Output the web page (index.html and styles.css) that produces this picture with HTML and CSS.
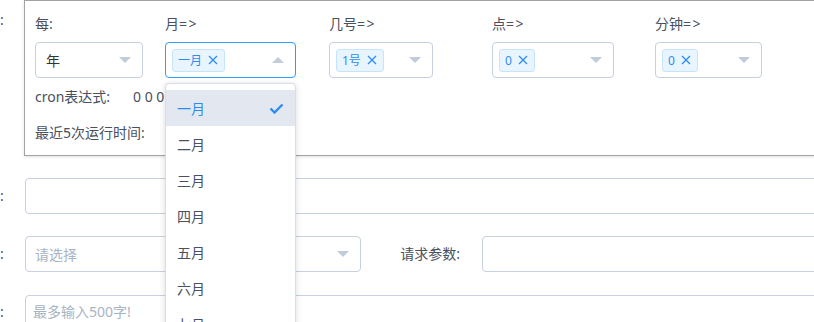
FILE: index.html
```html
<!DOCTYPE html>
<html lang="zh">
<head>
<meta charset="utf-8">
<link rel="stylesheet" href="styles.css">
</head>
<body>
<div class="page">
  <div class="row row-cron">
    <div class="lbl lbl-top">:</div>
    <div class="panel">
      <div class="fields">
        <div class="field">
          <div class="flabel">每:</div>
          <div class="sel w-year"><span class="val">年</span><span class="arrow"></span></div>
        </div>
        <div class="field">
          <div class="flabel">月<span class="op">=&gt;</span></div>
          <div class="sel has-tag w-month focus">
            <span class="tag">一月<svg class="x" width="10" height="10" viewBox="0 0 10 10"><path d="M1 1L9 9M9 1L1 9" stroke="#2d8cf0" stroke-width="1.3" fill="none"/></svg></span>
            <span class="arrow up"></span>
            <ul class="dropdown">
              <li class="selected">一月<svg class="check" width="15" height="11" viewBox="0 0 15 11"><path d="M1.5 5.5L5.5 9.5L13.5 1.5" stroke="#2d8cf0" stroke-width="2.4" fill="none"/></svg></li>
              <li>二月</li>
              <li>三月</li>
              <li>四月</li>
              <li>五月</li>
              <li>六月</li>
              <li>七月</li>
              <li>八月</li>
            </ul>
          </div>
        </div>
        <div class="field">
          <div class="flabel">几号<span class="op">=&gt;</span></div>
          <div class="sel has-tag w-day"><span class="tag">1号<svg class="x" width="10" height="10" viewBox="0 0 10 10"><path d="M1 1L9 9M9 1L1 9" stroke="#2d8cf0" stroke-width="1.3" fill="none"/></svg></span><span class="arrow"></span></div>
        </div>
        <div class="field">
          <div class="flabel">点<span class="op">=&gt;</span></div>
          <div class="sel has-tag w-hour"><span class="tag">0<svg class="x" width="10" height="10" viewBox="0 0 10 10"><path d="M1 1L9 9M9 1L1 9" stroke="#2d8cf0" stroke-width="1.3" fill="none"/></svg></span><span class="arrow"></span></div>
        </div>
        <div class="field">
          <div class="flabel">分钟<span class="op">=&gt;</span></div>
          <div class="sel has-tag w-min"><span class="tag">0<svg class="x" width="10" height="10" viewBox="0 0 10 10"><path d="M1 1L9 9M9 1L1 9" stroke="#2d8cf0" stroke-width="1.3" fill="none"/></svg></span><span class="arrow"></span></div>
        </div>
      </div>
      <div class="cline"><span class="clabel">cron表达式:</span><span class="cval">0 0 0 1 1 ? *</span></div>
      <div class="cline"><span class="clabel auto">最近5次运行时间:</span></div>
    </div>
  </div>

  <div class="row row-1">
    <div class="lbl">:</div>
    <div class="input"></div>
  </div>

  <div class="row row-2">
    <div class="lbl">:</div>
    <div class="sel ph w-method"><span class="placeholder">请选择</span><span class="arrow"></span></div>
    <div class="plabel">请求参数:</div>
    <div class="input"></div>
  </div>

  <div class="row row-3">
    <div class="lbl lbl-area">:</div>
    <div class="textarea"><span class="placeholder">最多输入500字!</span></div>
  </div>
</div>
</body>
</html>
```

FILE: styles.css
```css
html, body {
  margin: 0;
  padding: 0;
  background: #fff;
}
body {
  width: 814px;
  height: 322px;
  overflow: hidden;
  font-family: "Noto Sans", "Noto Sans CJK SC", sans-serif;
  font-size: 14px;
  color: #495060;
}
.page {
  width: 860px;
}
.row {
  display: flex;
  align-items: flex-start;
}
.lbl {
  width: 25px;
  flex: none;
  line-height: 36px;
  color: #495060;
}
.lbl-top {
  width: 24px;
  line-height: 20px;
  padding-top: 10px;
}
.lbl-area {
  line-height: 24px;
  padding-top: 5px;
}
.panel {
  flex: 1;
  border: 1px solid #a3a3a3;
  box-shadow: 0 1px 3px rgba(0, 0, 0, 0.12);
  padding: 13px 10px 5px;
  background: #fff;
  position: relative;
}
.fields {
  display: grid;
  grid-template-columns: 130px 164px 163px 163px 1fr;
}
.flabel {
  line-height: 20px;
  margin-bottom: 8px;
  color: #495060;
  white-space: nowrap;
}
.op {
  letter-spacing: 1.5px;
}
.sel {
  height: 36px;
  box-sizing: border-box;
  border: 1px solid #c5d1de;
  border-radius: 4px;
  display: flex;
  align-items: center;
  padding: 0 11px 0 10px;
  position: relative;
  background: #fff;
}
.sel.has-tag {
  padding-left: 6px;
}
.sel.ph {
  padding-left: 9px;
}
.sel.focus {
  border-color: #2d9cf6;
}
.w-year { width: 108px; }
.w-month { width: 131px; }
.w-day { width: 104px; }
.w-hour { width: 122px; }
.w-min { width: 107px; }
.w-method { width: 336px; flex: none; }
.val {
  color: #333;
}
.arrow {
  margin-left: auto;
  width: 0;
  height: 0;
  border-left: 6px solid transparent;
  border-right: 6px solid transparent;
  border-top: 6px solid #c0ccda;
}
.arrow.up {
  border-top: none;
  border-bottom: 6px solid #c0ccda;
}
.tag {
  display: inline-flex;
  align-items: center;
  height: 23px;
  box-sizing: border-box;
  padding: 0 6px 0 5px;
  border: 1px solid #c6e5fd;
  background: #e8f5ff;
  border-radius: 3px;
  color: #2d8cf0;
  font-size: 12px;
  gap: 6px;
}
.x {
  display: block;
}
.cline {
  height: 36px;
  display: flex;
  align-items: center;
  color: #495060;
  white-space: nowrap;
}
.clabel {
  width: 98px;
  flex: none;
}
.clabel.auto {
  width: auto;
}
.dropdown {
  position: absolute;
  top: 40px;
  left: -1px;
  width: 131px;
  box-sizing: border-box;
  margin: 0;
  padding: 6px 0;
  list-style: none;
  background: #fff;
  border: 1px solid #d7dee8;
  border-radius: 4px;
  box-shadow: 0 1px 6px rgba(0, 0, 0, 0.15);
  z-index: 10;
  height: 280px;
  overflow: hidden;
}
.dropdown li {
  height: 36px;
  display: flex;
  align-items: center;
  padding: 0 11px;
  color: #495060;
}
.dropdown li.selected {
  background: #e3e8f0;
  color: #2d8cf0;
}
.check {
  margin-left: auto;
  display: block;
}
.row-1 {
  margin-top: 22px;
}
.row-2 {
  margin-top: 22px;
}
.row-3 {
  margin-top: 23px;
}
.input {
  flex: 1;
  height: 36px;
  box-sizing: border-box;
  border: 1px solid #c5d1de;
  border-radius: 4px;
  background: #fff;
}
.plabel {
  width: 121px;
  flex: none;
  box-sizing: border-box;
  text-align: right;
  padding-right: 22px;
  line-height: 36px;
  color: #495060;
}
.placeholder {
  color: #a8b4c3;
}
.textarea {
  flex: 1;
  height: 64px;
  box-sizing: border-box;
  border: 1px solid #c5d1de;
  border-radius: 4px;
  padding: 4px 7px;
  line-height: 24px;
}
```
